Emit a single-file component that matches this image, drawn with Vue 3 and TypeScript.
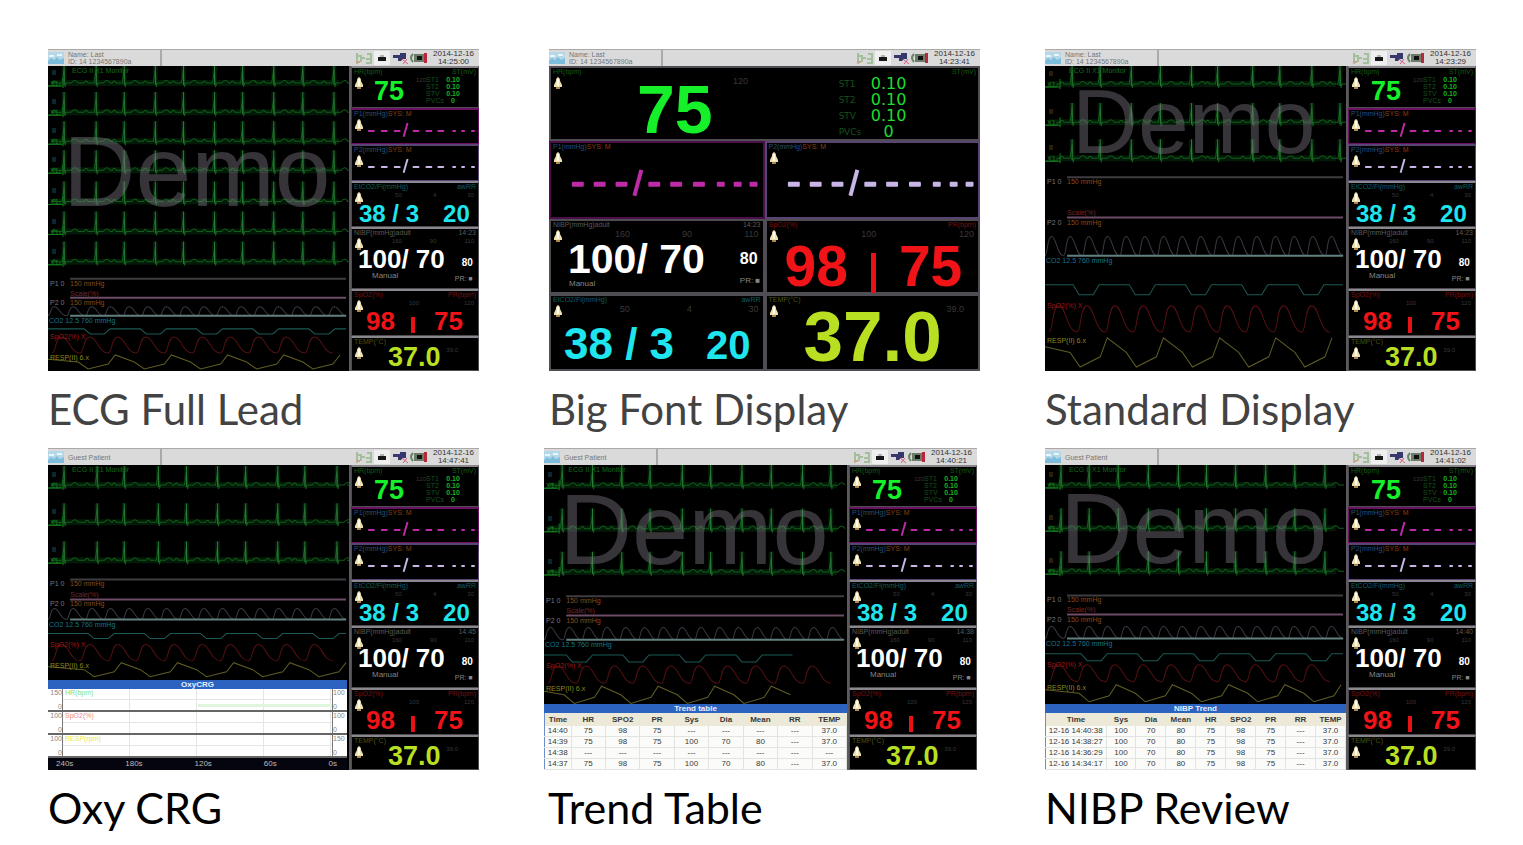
<script setup lang="ts">
interface Trace { d: string; color: string; width?: number }
interface Label { x: number; y: number; text: string; color: string }
interface Waves {
  height: number
  traces: Trace[]
  labels: Label[]
  demo?: { x: number; y: number; size: number }
}
interface Table { title: string; head: string[]; rows: string[][]; kind: string }
interface Screen {
  caption: string
  patient: string[]
  time: string
  clock: string
  waves?: Waves
  table?: Table
  oxy?: boolean
}

const GREEN = '#0f5f18'
const GLOW = '#031a08'
const SPIKE = '#2c7d3c'

function ecg(spikes: number[], base: number): string {
  let d = `M0 ${base + 3}H12V${base}`
  for (const x of spikes) {
    d += `H${x - 12}q2 -4 4 0H${x - 2}L${x} ${base - 14}L${x + 1} ${base + 4}L${x + 2} ${base}H${x + 7}q4 -5 7 0`
  }
  return d + 'H298'
}
function spikesUp(spikes: number[], base: number, h: number): string {
  return spikes.map((x) => `M${x} ${base + 2}V${Math.max(0, base - h)}`).join('')
}
function humps(base: number, h: number, period: number, start = 0): string {
  let d = `M${start} ${base}`
  for (let x = start; x < 300 - period; x += period) {
    const w = period
    d += `c${w * 0.15} 0 ${w * 0.1} ${-h} ${w * 0.35} ${-h}s${w * 0.3} ${h} ${w * 0.65} ${h}`
  }
  return d
}
function dips(y: number, h: number, start: number, end: number): string {
  let d = `M0 ${y}`
  for (let x = start; x < end - 20; x += 56) {
    d += `L${x} ${y}l6 ${h}h14l6 ${-h}`
  }
  return d + `H${end}`
}
function saw(top: number, h: number, trough: number, end: number): string {
  let d = `M0 ${top + h * 0.3}L${trough - 10} ${top + h * 0.5}`
  for (let x = trough; x < end; x += 56) {
    d += `L${x} ${top + h}L${x + 20} ${top + h * 0.65}L${x + 27} ${top}`
    if (x + 46 < end) d += `L${x + 46} ${top + h * 0.5}`
  }
  return d
}

interface Plan {
  height: number
  spikes: number[]
  bases: number[]
  spikeH: number
  resp: number
  art: number
  hump: number
  humpH: number
  co2: number
  co2H: number
  co2Start: number
  pleth: number
  plethH: number
  temp: number
  tempH: number
  tempStart: number
  end: number
  demo?: Waves['demo']
}
function build(p: Plan): Waves {
  const traces: Trace[] = []
  for (const b of p.bases) {
    traces.push({ d: `M4 ${b}H290`, color: GLOW, width: 6 })
    traces.push({ d: spikesUp(p.spikes, b, p.spikeH), color: GLOW, width: 5 })
  }
  for (const b of p.bases) {
    traces.push({ d: ecg(p.spikes, b), color: GREEN })
    traces.push({ d: spikesUp(p.spikes, b, p.spikeH), color: SPIKE })
    traces.push({ d: `M0 ${b + 3}H15M15 ${b + 5}V${b - 5}`, color: '#147a1c' })
  }
  traces.push(
    { d: `M22 ${p.resp}H297`, color: '#3f3d41', width: 2 },
    { d: `M22 ${p.art}H297`, color: '#6d4d66', width: 2 },
    { d: humps(p.hump, p.humpH, 18.6), color: '#3b3845' },
    { d: `M22 ${p.hump}H297`, color: '#62807f', width: 2 },
    { d: dips(p.co2, p.co2H, p.co2Start, p.end), color: '#1b5a56' },
    { d: humps(p.pleth + p.plethH, p.plethH, 28, 4), color: '#541012' },
    { d: saw(p.temp, p.tempH, p.tempStart, p.end), color: '#605d24' },
  )
  const labels: Label[] = [
    { x: 24, y: 7, text: 'ECG II X1 Monitor', color: '#126b1b' },
    { x: 2, y: p.resp + 7, text: 'P1  0', color: '#77747a' },
    { x: 22, y: p.resp + 7, text: '150 mmHg', color: '#8a4a18' },
    { x: 22, y: p.art - 2, text: 'Scale(%)', color: '#742828' },
    { x: 2, y: p.art + 7, text: 'P2  0', color: '#77747a' },
    { x: 22, y: p.art + 7, text: '150 mmHg', color: '#8a4a18' },
    { x: 1, y: p.hump + 7, text: 'CO2 12.5 760 mmHg', color: '#16768a' },
    { x: 2, y: p.pleth + 2, text: 'SpO2(%) X', color: '#a01616' },
    { x: 2, y: p.temp + 5, text: 'RESP(II) 6.x', color: '#8b861d' },
  ]
  for (const b of p.bases) {
    labels.push({ x: 4, y: b - 8, text: 'II', color: '#4e6650' })
    labels.push({ x: 2, y: b + 3, text: 'X1', color: '#16801f' })
  }
  return { height: p.height, traces, labels, demo: p.demo }
}

const full = build({
  height: 305, spikes: [16, 48, 76, 107, 135, 166, 194, 225, 254, 285],
  bases: [17, 46, 75, 104, 135, 165, 195], spikeH: 20,
  resp: 212, art: 231, hump: 249, humpH: 9, co2: 262, co2H: 5, co2Start: 36,
  pleth: 270, plethH: 16, temp: 288, tempH: 14, tempStart: 40, end: 297,
  demo: { x: 15, y: 140, size: 100 },
})
const standard = build({
  height: 305, spikes: [27, 55, 86, 115, 146, 172, 207, 234, 266, 294],
  bases: [18, 56, 92], spikeH: 19,
  resp: 111, art: 151, hump: 189, humpH: 19, co2: 218, co2H: 10, co2Start: 28,
  pleth: 239, plethH: 26, temp: 271, tempH: 29, tempStart: 35, end: 297,
  demo: { x: 27, y: 87, size: 91 },
})
const oxyWaves = build({
  height: 215, spikes: [16, 49, 76, 110, 138, 169, 197, 229, 256, 288],
  bases: [20, 57, 95], spikeH: 19,
  resp: 114, art: 134, hump: 154, humpH: 11, co2: 168, co2H: 5, co2Start: 40,
  pleth: 179, plethH: 16, temp: 197, tempH: 14, tempStart: 46, end: 297,
})
const trendWaves = build({
  height: 239, spikes: [18, 48, 77, 105, 137, 165, 196, 225, 256, 284],
  bases: [20, 63, 106], spikeH: 20,
  resp: 130, art: 149, hump: 173, humpH: 12, co2: 188, co2H: 7, co2Start: 22,
  pleth: 199, plethH: 17, temp: 219, tempH: 17, tempStart: 30, end: 246,
  demo: { x: 15, y: 98, size: 100 },
})
const nibpWaves = build({
  height: 239, spikes: [16, 44, 73, 103, 133, 161, 190, 220, 249, 279],
  bases: [20, 63, 106], spikeH: 20,
  resp: 130, art: 149, hump: 173, humpH: 12, co2: 188, co2H: 7, co2Start: 36,
  pleth: 199, plethH: 17, temp: 219, tempH: 17, tempStart: 44, end: 297,
  demo: { x: 15, y: 98, size: 100 },
})

const named = ['Name: Last', 'ID: 14 1234567890a']
const guest = ['Guest Patient']

const rows: Screen[][] = [
  [
    { caption: 'ECG Full Lead', patient: named, time: '14:25:00', clock: '14:23', waves: full },
    { caption: 'Big Font Display', patient: named, time: '14:23:41', clock: '14:23' },
    { caption: 'Standard Display', patient: named, time: '14:23:29', clock: '14:23', waves: standard },
  ],
  [
    { caption: 'Oxy CRG', patient: guest, time: '14:47:41', clock: '14:45', waves: oxyWaves, oxy: true },
    {
      caption: 'Trend Table', patient: guest, time: '14:40:21', clock: '14:38', waves: trendWaves,
      table: {
        title: 'Trend table', kind: 'trend',
        head: ['Time', 'HR', 'SPO2', 'PR', 'Sys', 'Dia', 'Mean', 'RR', 'TEMP'],
        rows: [
          ['14:40', '75', '98', '75', '---', '---', '---', '---', '37.0'],
          ['14:39', '75', '98', '75', '100', '70', '80', '---', '37.0'],
          ['14:38', '---', '---', '---', '---', '---', '---', '---', '---'],
          ['14:37', '75', '98', '75', '100', '70', '80', '---', '37.0'],
        ],
      },
    },
    {
      caption: 'NIBP Review', patient: guest, time: '14:41:02', clock: '14:40', waves: nibpWaves,
      table: {
        title: 'NIBP Trend', kind: 'review',
        head: ['Time', 'Sys', 'Dia', 'Mean', 'HR', 'SPO2', 'PR', 'RR', 'TEMP'],
        rows: ['12-16 14:40:38', '12-16 14:38:27', '12-16 14:36:29', '12-16 14:34:17'].map((t) => [
          t, '100', '70', '80', '75', '98', '75', '---', '37.0',
        ]),
      },
    },
  ],
]

interface Panel { kind: string; left: string; extra?: string; right?: string; limits: string[] }
const panels: Panel[] = [
  { kind: 'ecg', left: 'HR(bpm)', right: 'ST(mV)', limits: ['120'] },
  { kind: 'ibp one', left: 'P1(mmHg)', extra: 'SYS: M', limits: [] },
  { kind: 'ibp two', left: 'P2(mmHg)', extra: 'SYS: M', limits: [] },
  { kind: 'co2', left: 'EtCO2/Fi(mmHg)', right: 'awRR', limits: ['50', '4', '30'] },
  { kind: 'nibp', left: 'NIBP(mmHg)adult', limits: ['160', '90', '110'] },
  { kind: 'spo2', left: 'SpO2(%)', right: 'PR(bpm)', limits: ['100', '120'] },
  { kind: 'temp', left: 'TEMP(°C)', limits: ['39.0'] },
]
const leads: string[][] = [['ST1', '0.10'], ['ST2', '0.10'], ['STV', '0.10'], ['PVCs', '0']]
const bigDashes = [[21, 12], [43, 12], [65, 12], [98, 12], [120, 12], [143, 12], [167, 8], [184, 8], [200, 8]]
const smallDashes = [[16, 7], [29, 7], [42, 7], [61, 7], [74, 7], [86, 7], [101, 4], [110, 4], [120, 4]]
const oxyRows = [
  { name: 'HR(bpm)', color: '#7fe07f', hi: '150', right: '100' },
  { name: 'SpO2(%)', color: '#f08c7c', hi: '100', right: '100' },
  { name: 'RESP(rpm)', color: '#e8e84a', hi: '100', right: '150' },
]
const ticks = ['240s', '180s', '120s', '60s', '0s']
</script>

<template>
  <main class="page">
    <div v-for="(row, r) in rows" :key="r" class="row" :class="r ? 'lower' : 'upper'">
      <figure v-for="s in row" :key="s.caption" class="card">
        <div class="monitor">
          <header class="bar">
            <svg class="logo" viewBox="0 0 16 12" aria-hidden="true">
              <rect width="16" height="12" fill="#b5d8e8" />
              <path d="M0 9l3-3 3 2 3-3 3 3 4-2v6H0z" fill="#7dbddb" />
              <path d="M1 4h5M9 3h5" stroke="#e9f6fb" stroke-width="2" />
            </svg>
            <div class="patient"><span v-for="p in s.patient" :key="p">{{ p }}</span></div>
            <svg class="icons" viewBox="0 0 74 16" aria-hidden="true">
              <path d="M3 3v11M3 6h4v6M8 8h3M13 4h4v9h-5M12 9h4" fill="none" stroke="#a3bf9b" stroke-width="2" />
              <path d="M2 12h4" stroke="#d0a48a" stroke-width="2" />
              <rect x="20" y="1" width="16" height="14" fill="#efefef" />
              <path d="M24 7h8v4h-8z" fill="#181818" />
              <path d="M26 6h4" stroke="#777" />
              <path d="M39 5h7V3h6v6h-3l-2 2h-3V8h-5z" fill="#35376d" />
              <path d="M48 9l6 5M53 9l-4 5" stroke="#d6607a" stroke-width="1" />
              <path d="M59 4q-4 4 0 8" fill="none" stroke="#668366" stroke-width="2" />
              <rect x="60" y="4" width="10" height="8" fill="#6b7c68" />
              <rect x="63" y="6" width="5" height="4" fill="#111" />
              <rect x="70" y="3" width="3" height="10" fill="#b8263a" />
            </svg>
            <div class="clock"><span>2014-12-16</span><span>{{ s.time }}</span></div>
          </header>

          <div class="body" :class="s.waves ? 'split' : 'big'">
            <div v-if="s.waves" class="left">
              <svg class="waves" :viewBox="`0 0 300 ${s.waves.height}`" preserveAspectRatio="xMinYMin slice">
                <path v-for="(t, i) in s.waves.traces" :key="i" :d="t.d" :stroke="t.color" :stroke-width="t.width ?? 1" fill="none" />
                <text v-if="s.waves.demo" class="demo" :x="s.waves.demo.x" :y="s.waves.demo.y" :font-size="s.waves.demo.size">Demo</text>
                <text v-for="(l, i) in s.waves.labels" :key="'l' + i" :x="l.x" :y="l.y" :fill="l.color" font-size="7">{{ l.text }}</text>
              </svg>

              <section v-if="s.oxy" class="oxy">
                <h3 class="strip">OxyCRG</h3>
                <div v-for="o in oxyRows" :key="o.name" class="oxyrow">
                  <div class="scale"><span>{{ o.hi }}</span><span>0</span></div>
                  <div class="plot">
                    <span :style="{ color: o.color }">{{ o.name }}</span>
                  </div>
                  <div class="scale end"><span>{{ o.right }}</span><span>0</span></div>
                </div>
                <div class="ticks"><span v-for="t in ticks" :key="t">{{ t }}</span></div>
              </section>

              <table v-if="s.table" class="table" :class="s.table.kind">
                <caption class="strip">{{ s.table.title }}</caption>
                <thead>
                  <tr><th v-for="h in s.table.head" :key="h" scope="col">{{ h }}</th></tr>
                </thead>
                <tbody>
                  <tr v-for="(line, i) in s.table.rows" :key="i">
                    <td v-for="(c, j) in line" :key="j">{{ c }}</td>
                  </tr>
                </tbody>
              </table>
            </div>

            <div class="panels">
              <section v-for="p in panels" :key="p.kind" class="panel" :class="p.kind">
                <div class="labels">
                  <span>{{ p.left }}<i v-if="p.extra">{{ p.extra }}</i></span>
                  <span v-if="p.right">{{ p.right }}</span>
                  <span v-if="p.kind === 'nibp'">{{ s.clock }}</span>
                </div>
                <div class="marks">
                  <svg class="bell" viewBox="0 0 10 12" aria-hidden="true">
                    <path d="M5 0C3 1 3 3 3 4L1 8v2h8V8L7 4C7 3 7 1 5 0z" fill="#eedfae" />
                    <path d="M5 2v7" stroke="#fffdf0" stroke-width="2" />
                    <path d="M3 11h4" stroke="#a9884e" stroke-width="2" />
                  </svg>
                  <span v-for="(l, i) in p.limits" :key="i">{{ l }}</span>
                </div>
                <div class="values">
                  <template v-if="p.kind === 'ecg'">
                    <b>75</b>
                    <dl class="st">
                      <div v-for="l in leads" :key="l[0]"><dt>{{ l[0] }}</dt><dd>{{ l[1] }}</dd></div>
                    </dl>
                  </template>
                  <template v-else-if="p.kind.startsWith('ibp')">
                    <svg v-if="s.waves" class="dashes" viewBox="0 0 127 24" role="img" aria-label="---/--- ---">
                      <rect v-for="d in smallDashes" :key="d[0]" :x="d[0]" y="12" :width="d[1]" height="2" rx="1" />
                      <path d="M52 19L56 5" stroke-width="2" />
                    </svg>
                    <svg v-else class="dashes" viewBox="0 0 213 54" role="img" aria-label="---/--- ---">
                      <rect v-for="d in bigDashes" :key="d[0]" :x="d[0]" y="31" :width="d[1]" height="5" rx="1" />
                      <path d="M84 45L91 19" stroke-width="4" />
                    </svg>
                  </template>
                  <template v-else-if="p.kind === 'co2'"><b>38 / 3</b><b class="second">20</b></template>
                  <template v-else-if="p.kind === 'nibp'">
                    <div class="pressure"><b>100/ 70</b><small>Manual</small></div>
                    <div class="mean"><strong>80</strong><small>PR: ■</small></div>
                  </template>
                  <template v-else-if="p.kind === 'spo2'"><b>98</b><span class="level"></span><b class="second">75</b></template>
                  <b v-else>37.0</b>
                </div>
              </section>
            </div>
          </div>
        </div>
        <figcaption>{{ s.caption }}</figcaption>
      </figure>
    </div>
  </main>
</template>

<style>
body { margin: 0; background: #fff; }
</style>

<style scoped>
.page { padding: 49px 47px 0 48px; font-family: "Liberation Sans", Arial, sans-serif; }
.row { display: grid; }
.upper { grid-template-columns: 431fr 70px 431fr 65px 431fr; margin-bottom: 3px; color: #434343; }
.lower { grid-template-columns: 431fr 65px 433fr 68px 431fr; color: #000; }
.card { margin: 0; min-width: 0; }
.card:nth-child(1) { grid-column: 1; }
.card:nth-child(2) { grid-column: 3; }
.card:nth-child(3) { grid-column: 5; }
figcaption { padding-top: 2px; font: 400 43px/72px Lato, "Gill Sans", sans-serif; white-space: nowrap; }
.upper figcaption { font-size: 42px; }
.lower .card:nth-child(2) figcaption { padding-left: 4px; }

.monitor { background: #000; line-height: 1; }
.bar { display: flex; align-items: center; height: 17px; box-sizing: border-box; border-top: 1px solid #a9a9a9; background: #dadada; color: #777; }
.logo { width: 16px; height: 12px; }
.patient { display: flex; flex-direction: column; justify-content: center; width: 98px; height: 16px; box-sizing: border-box; padding-left: 4px; border-right: 2px solid #aaa; font-size: 7px; line-height: 7px; white-space: nowrap; }
.icons { width: 74px; height: 16px; margin-left: auto; }
.clock { display: flex; flex-direction: column; align-items: center; width: 51px; font-size: 8px; line-height: 8px; color: #333; }

.body { display: grid; }
.split { grid-template-columns: minmax(0, 1fr) 130px; }
.left { display: flex; flex-direction: column; min-width: 0; }
.waves { display: block; flex: 1 1 0; min-height: 0; width: 100%; overflow: hidden; }
.demo { fill: #7a737e; fill-opacity: 0.45; }

.panels { display: grid; min-width: 0; }
.split .panels { grid-template-rows: 42px 36px 37px 46px 62px 47px 35px; border-left: 2px solid #5c5a5f; }
.big .panels { grid-template-columns: 1fr 1fr; grid-template-rows: 75px 78px 75px 77px; }
.big .ecg { grid-column: 1 / 3; }
.big .nibp, .big .spo2 { grid-row: 3; }
.big .co2 { grid-row: 4; grid-column: 1; }
.big .temp { grid-row: 4; }

.panel { display: grid; grid-template: 8px minmax(0, 1fr) / minmax(0, 1fr); box-sizing: border-box; min-width: 0; border: 1px solid #4e4b51; border-top: 2px solid #8b888d; }
.big .panel { border: 2px solid #514d54; }
.panel.one { border-color: #6c1265; }
.panel.two { border-color: #594574; }
.big .panel.one { border-color: #4b0f49; }
.labels { display: flex; justify-content: space-between; padding: 0 2px; font-size: 7px; line-height: 8px; white-space: nowrap; }
.labels i { color: #8a3d12; font-style: normal; }
.marks { grid-area: 2 / 1; display: flex; justify-content: space-between; align-items: flex-start; padding: 1px 4px 0 2px; font-size: 6px; color: #39383b; }
.bell { width: 10px; height: 12px; }
.values { grid-area: 2 / 1; display: flex; align-items: flex-start; min-width: 0; }
.values b { white-space: pre; line-height: 1; }
.dashes { display: block; width: 100%; }

.ecg .labels { color: #145c17; }
.ecg b { color: #15f02a; }
.ibp .labels { color: #254f7c; }
.one .dashes { fill: #bd2ba6; stroke: #bd2ba6; }
.two .dashes { fill: #c9b6e6; stroke: #c9b6e6; }
.dashes rect { stroke: none; }
.co2 .labels { color: #125c60; }
.co2 b { color: #1fe5ee; }
.nibp .labels { color: #5a5a5a; }
.nibp b, .nibp strong { color: #fff; }
.nibp small { color: #858585; }
.spo2 .labels { color: #7a1010; }
.spo2 b { color: #f01318; }
.temp .labels { color: #4d5412; }
.temp b { color: #b9df22; }
.level { background: #e81216; }

.st { margin: 0; color: #16b323; }
.st div { display: flex; }
.st dt { color: #14501a; }
.st dd { margin: 0; text-align: center; }
.pressure, .mean { display: flex; flex-direction: column; }

.split .ecg b { padding: 2px 0 0 22px; font-size: 27px; }
.split .st { margin-left: 22px; font-size: 7px; line-height: 7px; font-weight: 700; }
.split .st dt { width: 19px; font-weight: 400; }
.split .st dd { width: 16px; }
.split .ecg .marks { padding-right: 52px; }
.split .co2 b { padding: 11px 0 0 7px; font-size: 24px; }
.split .co2 .second { padding-left: 24px; }
.split .nibp b { padding: 9px 0 0 6px; font-size: 26px; }
.split .pressure small { padding-left: 20px; font-size: 8px; }
.split .mean { padding: 21px 0 0 17px; font-size: 10px; gap: 7px; }
.split .mean small { margin-left: -7px; font-size: 7px; white-space: nowrap; }
.split .spo2 b { padding: 9px 0 0 14px; font-size: 26px; }
.split .level { width: 4px; height: 16px; margin: 18px 0 0 16px; }
.split .spo2 .second { padding-left: 19px; }
.split .temp b { padding-left: 36px; font-size: 27px; line-height: 22px; }
.split .temp .marks { padding-right: 20px; }

.big .marks { font-size: 9px; }
.big .ecg .marks { padding-right: 230px; }
.big .ecg b { padding: 2px 0 0 86px; font-size: 68px; line-height: 62px; }
.big .st { margin-left: 126px; font: 400 16px/16px "DejaVu Sans", sans-serif; color: #1fdc2e; }
.big .st dt { width: 29px; font-size: 9px; }
.big .st dd { width: 42px; }
.big .co2 b { padding: 18px 0 0 13px; font-size: 44px; }
.big .co2 .second { padding: 21px 0 0 32px; font-size: 40px; }
.big .nibp b { padding: 10px 0 0 17px; font-size: 41px; }
.big .pressure small { padding-left: 18px; font-size: 8px; }
.big .mean { gap: 10px; padding: 22px 0 0 35px; font-size: 16px; }
.big .mean small { font-size: 8px; white-space: nowrap; }
.big .spo2 b { padding: 9px 0 0 18px; font-size: 57px; line-height: 56px; }
.big .level { width: 5px; height: 40px; margin: 24px 0 0 23px; }
.big .spo2 .second { padding-left: 23px; }
.big .temp b { padding-left: 37px; font-size: 71px; line-height: 66px; }
.big .temp .marks { padding-right: 14px; }

.strip { margin: 0; height: 9px; background: #2c63c0; color: #e8efff; font-size: 8px; line-height: 9px; font-weight: 700; text-align: center; }
.oxy { margin-right: 2px; background: #fff; }
.oxyrow { display: grid; grid-template-columns: 15px minmax(0, 1fr) 15px; height: 23px; box-sizing: border-box; border-bottom: 2px solid #666; }
.scale { display: flex; flex-direction: column; justify-content: space-between; align-items: flex-end; border-right: 1px solid #777; font-size: 7px; color: #888; }
.scale.end { align-items: flex-start; border: 0; border-left: 1px solid #777; }
.plot { padding-left: 2px; font-size: 7px; background: repeating-linear-gradient(90deg, transparent 0 66px, #e5e5e5 66px 67px), linear-gradient(transparent 10px, #e5e5e5 10px 11px, transparent 11px); }
.oxyrow:nth-child(2) .plot { background: linear-gradient(#dff5dc, #dff5dc) right 15px / 50% 3px no-repeat, repeating-linear-gradient(90deg, transparent 0 66px, #e5e5e5 66px 67px), linear-gradient(transparent 10px, #e5e5e5 10px 11px, transparent 11px); }
.ticks { display: flex; justify-content: space-between; height: 12px; padding: 0 10px 0 8px; background: #050510; color: #bbb; font-size: 8px; line-height: 11px; }

.table { width: 100%; table-layout: fixed; border-collapse: collapse; border-left: 1px solid #6c8fc8; background: #fbfcfa; color: #383838; font-size: 8px; }
.table th { height: 13px; padding: 0; background: #ece9d8; font-weight: 700; line-height: 13px; }
.table td { height: 11px; padding: 0; box-sizing: border-box; border-right: 1px solid #e2e4e2; border-bottom: 1px solid #e2e4e2; line-height: 10px; text-align: center; white-space: nowrap; }
.trend th:first-child { width: 26px; }
.review th:first-child { width: 60px; }
</style>
